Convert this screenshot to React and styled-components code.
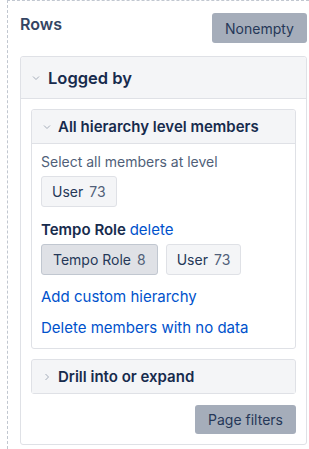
import React from 'react';
import styled, { createGlobalStyle } from 'styled-components';

const GlobalStyle = createGlobalStyle`
  body {
    margin: 0;
    background: #fff;
    font-family: Inter, "Noto Sans", sans-serif;
    color: #172b4d;
  }
`;

const Panel = styled.div`
  margin-left: 7px;
  height: 449px;
  box-sizing: border-box;
  border-left: 1px dashed #c1c7d0;
  border-top: 1px dashed #c1c7d0;
  padding: 12px 2px 0 12px;
`;

const TopRow = styled.div`
  display: flex;
  justify-content: space-between;
  align-items: flex-start;
`;

const Title = styled.div`
  font-size: 16px;
  font-weight: 600;
  color: #344563;
  line-height: 20px;
  margin-top: 1px;
`;

const GreyButton = styled.button`
  font-family: inherit;
  font-size: 14px;
  color: #253858;
  background: #a5adba;
  border: none;
  border-radius: 3px;
  height: ${(p) => p.$h}px;
  width: ${(p) => p.$w}px;
  padding: 0;
`;

const Card = styled.div`
  border: 1px solid #dfe1e6;
  border-radius: 3px;
  margin-top: ${(p) => p.$mt}px;
  background: ${(p) => (p.$closed ? '#f4f5f7' : '#fff')};
`;

const CardHeader = styled.div`
  display: flex;
  align-items: center;
  gap: ${(p) => (p.$big ? 8 : 7)}px;
  height: ${(p) => p.$h}px;
  padding-left: 11px;
  background: #f4f5f7;
  border-bottom: ${(p) => (p.$open ? '1px solid #dfe1e6' : 'none')};
  border-radius: 3px 3px 0 0;
  font-size: ${(p) => (p.$big ? 16.5 : 15)}px;
  font-weight: 600;
  color: #172b4d;
`;

const CardBody = styled.div`
  padding: ${(p) => p.$pad};
`;

const Hint = styled.div`
  font-size: 14px;
  color: #505f79;
  line-height: 18px;
`;

const ChipRow = styled.div`
  display: flex;
  gap: 8px;
  margin-top: ${(p) => p.$mt}px;
`;

const Chip = styled.div`
  display: flex;
  align-items: center;
  gap: 6px;
  height: 31px;
  box-sizing: border-box;
  padding: 0 ${(p) => (p.$active ? 11 : 10)}px;
  border-radius: 3px;
  border: 1px solid ${(p) => (p.$active ? '#c1c7d0' : '#dfe1e6')};
  background: ${(p) => (p.$active ? '#dfe1e6' : '#f4f5f7')};
  font-size: 14px;
  color: #253858;
`;

const Count = styled.span`
  color: #505f79;
`;

const Label = styled.div`
  margin-top: 14px;
  font-size: 15px;
  font-weight: 600;
  line-height: 18px;
  color: #172b4d;
`;

const Link = styled.a`
  color: #0052cc;
  text-decoration: none;
  font-weight: 400;
  font-size: 15px;
  display: ${(p) => (p.$block ? 'block' : 'inline')};
  margin-top: ${(p) => p.$mt || 0}px;
  line-height: 18px;
`;

const Footer = styled.div`
  display: flex;
  justify-content: flex-end;
  margin-top: 11px;
`;

const Chevron = ({ dir }) => (
  <svg width="8" height="8" viewBox="0 0 8 8">
    {dir === 'down' ? (
      <polyline points="1,2.5 4,5.5 7,2.5" fill="none" stroke="#a5adba" strokeWidth="1" />
    ) : (
      <polyline points="2.5,1 5.5,4 2.5,7" fill="none" stroke="#a5adba" strokeWidth="1" />
    )}
  </svg>
);

const App = () => (
  <>
    <GlobalStyle />
    <Panel>
      <TopRow>
        <Title>Rows</Title>
        <GreyButton $w={95} $h={30}>Nonempty</GreyButton>
      </TopRow>
      <Card $mt={13}>
        <CardHeader $big $open $h={41}>
          <Chevron dir="down" />
          Logged by
        </CardHeader>
        <CardBody $pad="10px">
          <Card $mt={0}>
            <CardHeader $open $h={33}>
              <Chevron dir="down" />
              All hierarchy level members
            </CardHeader>
            <CardBody $pad="9px 9px 11px 9px">
              <Hint>Select all members at level</Hint>
              <ChipRow $mt={5}>
                <Chip>User <Count>73</Count></Chip>
              </ChipRow>
              <Label>
                Tempo Role <Link href="#">delete</Link>
              </Label>
              <ChipRow $mt={5}>
                <Chip $active>Tempo Role <Count>8</Count></Chip>
                <Chip>User <Count>73</Count></Chip>
              </ChipRow>
              <Link $block $mt={13} href="#">Add custom hierarchy</Link>
              <Link $block $mt={13} href="#">Delete members with no data</Link>
            </CardBody>
          </Card>
          <Card $mt={10} $closed>
            <CardHeader $h={33}>
              <Chevron dir="right" />
              Drill into or expand
            </CardHeader>
          </Card>
          <Footer>
            <GreyButton $w={101} $h={29}>Page filters</GreyButton>
          </Footer>
        </CardBody>
      </Card>
    </Panel>
  </>
);

export default App;
